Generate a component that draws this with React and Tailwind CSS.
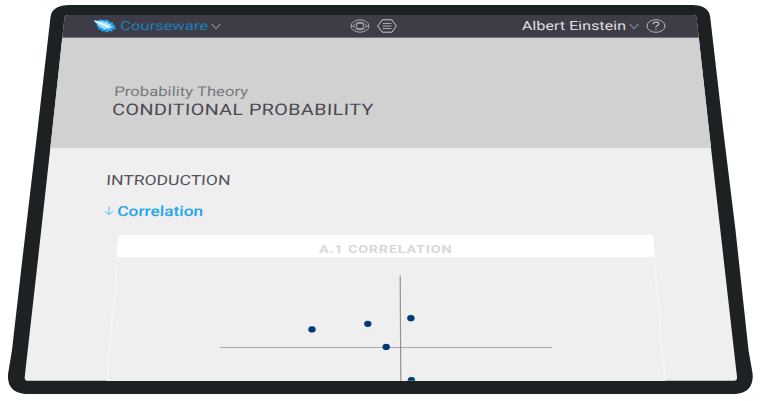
import { useLayoutEffect, useRef, useState } from "react";

// Text stretched to a fixed width and slanted to follow the tilted tablet.
function TiltText({ width, skew = 0, className = "" , children }) {
  const ref = useRef(null);
  const [scale, setScale] = useState(1);
  useLayoutEffect(() => {
    setScale(width / ref.current.offsetWidth);
  }, [width]);
  return (
    <div className={`shrink-0 whitespace-nowrap leading-none ${className}`} style={{ width }}>
      <div
        className="w-max origin-[0_84%]"
        style={{ transform: `skewX(${skew}deg) scaleX(${scale})` }}
      >
        <span ref={ref} className="block w-max">{children}</span>
      </div>
    </div>
  );
}

function LeafLogo() {
  return (
    <svg viewBox="0 0 24 14" className="h-[14px] w-6 shrink-0">
      <path
        d="M0 1 4 1.800 7 .5l4.500.8L15 .7l1.500 2.500 3.500.3v2l2.500 1.500-1 1 2 2.500-4.500-.3 1 2.500-4-.8-1.500 1.700-3.500-1.700-2.500.5-.5-2.200-3 .3.500-2.200L3.500 8l1-2L2.500 4z"
        fill="#25a5ee"
      />
      <path d="M3 2.500 9 2l2.500 1.100 2.500-.4 1 2 3 .3-.5 1.800 2.500 2-3.500-.1 .2 1.500-3-.5-1.700 1.100-2.500-1.800-2.500-.2.500-1.600L5 6.500z" fill="#a5defa" />
      <path d="M2 2Q9 5 16 8" stroke="#f0faff" strokeWidth="1.400" fill="none" />
    </svg>
  );
}

function Chevron({ className }) {
  return (
    <svg viewBox="0 0 10 7" className={`h-[7px] w-[10px] shrink-0 ${className}`} fill="none" stroke="#aaa9b0" strokeWidth="1">
      <path d="M.7 1 5 5.800 9.300 1" />
    </svg>
  );
}

function EyeIcon() {
  return (
    <svg viewBox="0 0 20 14" className="h-[14px] w-5 shrink-0" fill="none" stroke="#b9b8bd" strokeWidth="1">
      <ellipse cx="10" cy="7" rx="9" ry="6.200" strokeWidth=".9" />
      <path d="M1.200 7H3L6.500 3.700Q10 2.800 13.500 3.700L17 7h1.800M3 7 6.500 10.300Q10 11.200 13.500 10.300L17 7" strokeWidth=".8" />
      <ellipse cx="10" cy="7" rx="3.900" ry="3" />
    </svg>
  );
}

function HexIcon() {
  return (
    <svg viewBox="0 0 20 14" className="ml-[6.5px] h-[14px] w-5 shrink-0" fill="none" stroke="#c9c8cc" strokeWidth="1">
      <path d="M.7 7 5.200.8h9.600L19.300 7l-4.500 6.200H5.200z" />
      <path d="M5.800 4.500h8.600M5.500 7h9M5.800 9.500h8.600" strokeWidth=".9" stroke="#b4b3bb" />
    </svg>
  );
}

function HelpIcon() {
  return (
    <svg viewBox="0 0 20 14" className="ml-[6.5px] h-[14px] w-5 shrink-0" fill="none" stroke="#c4c3c8" strokeWidth="1">
      <ellipse cx="10" cy="7" rx="9" ry="6.300" strokeWidth=".9" />
      <path d="M7 5.200Q7.200 3.200 10 3.200T12.800 5Q12.800 6 11.200 6.700T10 8.500M10 9.700v1.300" strokeWidth="1.200" />
    </svg>
  );
}

const points = [
  [312, 329.4],
  [367.8, 323.8],
  [410.900, 318.200],
  [386.200, 346.900],
  [411.400, 380.200],
];

function ScatterPlot() {
  return (
    <svg viewBox="106 257 560 124" className="h-[124px] w-[560px]">
      <path d="M220 347.500H552" stroke="#aaaaaa" />
      <path d="M400.200 275.500 400.800 381" stroke="#929292" strokeWidth="1.200" />
      {points.map(([x, y]) => (
        <ellipse key={x} cx={x} cy={y} rx="3.700" ry="3.100" fill="#003a78" />
      ))}
    </svg>
  );
}

export default function App() {
  return (
    <div className="h-[401px] w-[760px] overflow-hidden bg-white font-['Roboto',sans-serif]">
      <div className="h-full bg-[#1c2224] [clip-path:path('M70_5H692Q708.500_5_710.200_17L723.200_130L735.500_230L748.500_350L752.500_373Q754.500_392_736_394H25Q6_392_8.200_373L12_350L21.700_265L37.500_130L50.500_17Q52_5_70_5Z')]">
        <div className="flex h-full flex-col bg-[#efefef] pt-[15px] [clip-path:path('M68_15H693Q696.200_15_696.600_18L709_130L737_377Q737.300_380.800_734_380.800H28Q24.300_380.800_24.700_377L37_268L52.300_130L64.400_18Q64.800_15_68_15Z')]">
          <header className="flex h-[23px] shrink-0 items-start border-b border-[#77767b] bg-[#3e3d47] pl-[92.5px] pt-[3.5px]">
            <LeafLogo />
            <TiltText width={87.5} skew={-2} className="ml-[3.5px] mt-[1.2px] text-[12.5px] text-[#1c7fb8]">Courseware</TiltText>
            <Chevron className="ml-[3px] mt-1" />
            <div className="ml-[129.5px] flex">
              <EyeIcon />
              <HexIcon />
            </div>
            <TiltText width={104.5} skew={2} className="ml-[125.5px] mt-[1.2px] text-[12.5px] text-[#dedee0]">Albert Einstein</TiltText>
            <Chevron className="ml-[2.5px] mt-1" />
            <HelpIcon />
          </header>
          <section className="h-[110px] shrink-0 bg-[#d1d1d1] pt-[47.4px]">
            <TiltText width={133.5} skew={-3} className="ml-[113.5px] text-[13.5px] text-[#7a7a7d]">Probability Theory</TiltText>
            <TiltText width={261.5} skew={-2} className="ml-[112px] mt-[3.6px] text-[16px] tracking-[0.02em] text-[#4b4a52]">CONDITIONAL PROBABILITY</TiltText>
          </section>
          <main className="flex-1 pt-[25.2px]">
            <TiltText width={124} skew={-3.500} className="ml-[105.5px] text-[14px] text-[#54535b]">INTRODUCTION</TiltText>
            <div className="ml-[103.5px] mt-[16.800px] flex">
              <svg viewBox="0 0 10 10" className="mt-[2.5px] h-[10px] w-[10px] shrink-0" fill="none" stroke="#5bb9ee">
                <path d="M5.300.5 4.900 8.500M.8 5.300 4.900 8.600 9.200 5.300" />
              </svg>
              <TiltText width={85.5} skew={-3} className="ml-[3.8px] text-[14px] font-medium text-[#25a5ea]">Correlation</TiltText>
            </div>
            <div className="ml-[106px] mt-[17px] h-[146px] w-[560px] bg-[#f4f4f4] [clip-path:polygon(12.500px_0,547px_0,560px_100%,0_100%)]">
              <div className="h-[22.5px] bg-white pl-[212.5px] pt-[8.800px]">
                <TiltText width={133} className="text-[11.5px] font-bold tracking-[0.06em] text-[#d8d8d8]">A.1 CORRELATION</TiltText>
              </div>
              <div className="h-[124px] bg-[#efefef] [clip-path:polygon(12.500px_0,547px_0,558px_100%,2px_100%)]">
                <ScatterPlot />
              </div>
            </div>
          </main>
        </div>
      </div>
    </div>
  );
}
